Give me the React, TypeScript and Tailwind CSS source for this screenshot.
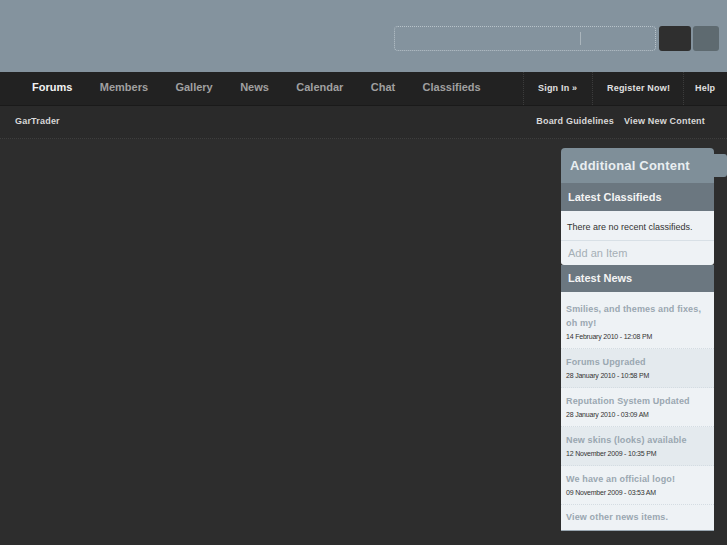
const navItems = ['Forums', 'Members', 'Gallery', 'News', 'Calendar', 'Chat', 'Classifieds'];

const news = [
  { title: 'Smilies, and themes and fixes, oh my!', date: '14 February 2010 - 12:08 PM' },
  { title: 'Forums Upgraded', date: '28 January 2010 - 10:58 PM' },
  { title: 'Reputation System Updated', date: '28 January 2010 - 03:09 AM' },
  { title: 'New skins (looks) available', date: '12 November 2009 - 10:35 PM' },
  { title: 'We have an official logo!', date: '09 November 2009 - 03:53 AM' },
];

export default function App() {
  return (
    <div className="w-[727px] h-[545px] overflow-hidden bg-[#2d2d2d] font-['Liberation_Sans',Arial,sans-serif]">
      {/* Header */}
      <div className="h-[72px] bg-[#84939e] flex items-start justify-end pt-[26px] pr-[8px]">
        <div className="relative w-[262px] h-[25px] rounded-[4px] border border-dotted border-[#b8c3ca]">
          <div className="absolute left-[185px] top-[5px] w-px h-[13px] bg-[#aab5bc]" />
        </div>
        <div className="ml-[3px] w-[32px] h-[25px] rounded-[3px] bg-[#2f2f2f]" />
        <div className="ml-[2px] w-[26px] h-[25px] rounded-[3px] bg-[#5e6a70]" />
      </div>

      {/* Primary nav */}
      <div className="h-[34px] bg-[#222222] border-b border-[#1a1a1a] flex items-stretch">
        <div className="flex items-center pl-[32px] pb-[3px] gap-[27.4px] flex-1">
          {navItems.map((item, i) => (
            <span
              key={item}
              className={`text-[11px] font-bold ${i === 0 ? 'text-[#f2f2f2]' : 'text-[#a0a0a0]'}`}
            >
              {item}
            </span>
          ))}
        </div>
        <div className="flex items-stretch text-[9px] font-bold text-[#e0e0e0] tracking-[0.2px]">
          <div className="w-[69px] border-l border-dotted border-[#3c3c3c] flex items-center pl-[14px]">Sign In &raquo;</div>
          <div className="w-[91px] border-l border-dotted border-[#3c3c3c] flex items-center pl-[14px]">Register Now!</div>
          <div className="w-[44px] border-l border-dotted border-[#3c3c3c] flex items-center pl-[11px]">Help</div>
        </div>
      </div>

      {/* Sub bar */}
      <div className="h-[33px] bg-[#2a2a2a] border-b border-dotted border-[#3e3e3e] flex items-center justify-between pl-[15px] pr-[22px] text-[9px] font-bold text-[#d8d8d8] tracking-[0.2px]">
        <span>GarTrader</span>
        <div className="flex gap-[10px]">
          <span>Board Guidelines</span>
          <span>View New Content</span>
        </div>
      </div>

      {/* Body */}
      <div className="flex justify-end pt-[9px] pr-[13px]">
        <div className="w-[153px]">
          <div className="relative h-[35px] bg-[#7f8f99] rounded-t-[4px] flex items-center pl-[9px] text-[13px] font-bold text-[#e9eef1] tracking-[0.2px]">
            Additional Content
            <div className="absolute right-[-13px] top-[6px] w-[13px] h-[23px] bg-[#7f8f99] rounded-r-[3px]" />
          </div>

          <div className="h-[28px] bg-[#6b7780] flex items-center pl-[7px] text-[11px] font-bold text-[#f4f4f4]">Latest Classifieds</div>
          <div className="bg-[#eef2f5] rounded-b-[3px]">
            <div className="h-[30px] flex items-center pt-[4px] pl-[6px] text-[9px] text-[#333] border-b border-[#d8e0e6]">There are no recent classifieds.</div>
            <div className="h-[24px] flex items-center pl-[7px] text-[11px] text-[#a5afb6]">Add an Item</div>
          </div>

          <div className="h-[27px] bg-[#6b7780] flex items-center pl-[7px] text-[11px] font-bold text-[#f4f4f4]">Latest News</div>
          <div className="bg-[#eef2f5]">
            {news.map((n, i) => (
              <div
                key={n.title}
                className={`px-[5px] border-b border-dotted border-[#d4dce2] ${i % 2 === 1 ? 'bg-[#e4eaee]' : 'bg-[#eef2f5]'} ${i === 0 ? 'pt-[10px] pb-[5px]' : 'pt-[6px] pb-[5px]'}`}
              >
                <div className="text-[9px] font-bold text-[#9aa7b1] leading-[14px] tracking-[0.15px]">{n.title}</div>
                <div className="text-[7px] text-[#333] leading-[12px] mt-[1px] tracking-[-0.2px]">{n.date}</div>
              </div>
            ))}
            <div className="h-[26px] flex items-center pt-[1px] pl-[5px] text-[9px] font-bold text-[#9aa7b1] tracking-[0.15px] border-b border-[#9aa7b1]">View other news items.</div>
          </div>
        </div>
      </div>
    </div>
  );
}
